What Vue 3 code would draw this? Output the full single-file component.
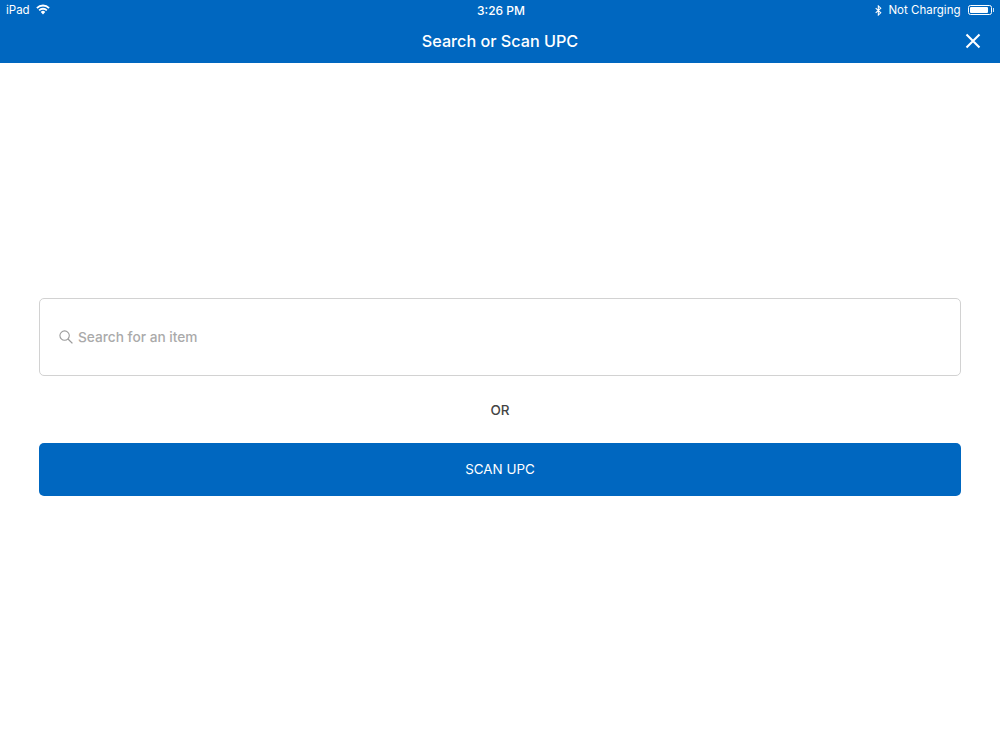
<script setup>
</script>

<template>
  <div class="page">
    <header class="top">
      <div class="status">
        <div class="st-left">
          <span>iPad</span>
          <svg class="wifi" width="14" height="11" viewBox="0 0 16 12"><path d="M8 11.8 5.4 8.9a3.6 3.6 0 0 1 5.2 0zM4.3 7.7 2.9 6.2a7.2 7.2 0 0 1 10.2 0l-1.4 1.5a5.2 5.2 0 0 0-7.4 0zM1.8 5.1.3 3.6a10.8 10.8 0 0 1 15.4 0l-1.5 1.5a8.7 8.7 0 0 0-12.4 0z" fill="#fff"/></svg>
        </div>
        <div class="st-time">3:26 PM</div>
        <div class="st-right">
          <svg class="bt" width="7" height="11" viewBox="0 0 8 12"><path d="M.8 3.2 6.6 8.6 3.8 11.2V.8l2.8 2.6L.8 8.8" fill="none" stroke="#fff" stroke-width="1.2"/></svg>
          <span class="charge">Not Charging</span>
          <span class="battery"><span class="level"></span></span>
          <span class="nub"></span>
        </div>
      </div>
      <div class="nav">
        <h1>Search or Scan UPC</h1>
        <svg class="close" width="16" height="16" viewBox="0 0 16 16"><path d="M1.5 1.5 14.5 14.5M14.5 1.5 1.5 14.5" stroke="#fff" stroke-width="2.1" fill="none"/></svg>
      </div>
    </header>
    <main class="body">
      <div class="search">
        <svg width="14" height="14" viewBox="0 0 14 14"><circle cx="5.6" cy="5.6" r="4.7" fill="none" stroke="#9b9b9b" stroke-width="1.1"/><path d="M9 9l4.4 4.4" stroke="#9b9b9b" stroke-width="1.3"/></svg>
        <span>Search for an item</span>
      </div>
      <div class="or">OR</div>
      <button class="scan">SCAN UPC</button>
    </main>
  </div>
</template>

<style>
body { margin: 0; background: #fff; }
</style>
<style scoped>
.page { width: 1000px; height: 750px; display: flex; flex-direction: column; font-family: Inter, "Liberation Sans", sans-serif; background: #fff; }
.top { background: #0067c0; color: #fff; height: 63px; flex: none; }
.status { height: 20px; display: grid; grid-template-columns: 1fr auto 1fr; align-items: center; padding: 0 6px; font-size: 11.5px; }
.st-left { display: flex; align-items: center; gap: 6px; }
.wifi { margin-top: -1px; }
.st-time { font-weight: 500; font-size: 12px; padding-left: 2px; }
.st-right { display: flex; align-items: center; justify-content: flex-end; }
.bt { margin-right: 6px; }
.battery { width: 24px; height: 10px; border: 1px solid #fff; border-radius: 2.5px; padding: 1px; box-sizing: border-box; display: flex; margin-left: 7px; }
.level { width: 18px; background: #fff; border-radius: 1px; }
.nub { width: 1.5px; height: 4px; background: #fff; margin-left: 1px; opacity: .8; }
.nav { position: relative; height: 43px; display: flex; align-items: center; justify-content: center; }
h1 { margin: 0 0 1px; font-size: 16.2px; font-weight: 500; }
.close { position: absolute; right: 19.5px; top: 13px; }
.body { padding: 235px 39px 0; display: flex; flex-direction: column; }
.search { height: 78px; box-sizing: border-box; border: 1px solid #d2d2d2; border-radius: 5px; display: flex; align-items: center; gap: 5px; padding: 0 0 1px 19px; color: #aaa; font-size: 13.7px; font-weight: 500; }
.or { height: 67px; padding-top: 1px; box-sizing: border-box; display: flex; align-items: center; justify-content: center; font-size: 13.5px; font-weight: 500; color: #444; }
.scan { height: 53px; border: 0; border-radius: 5px; padding: 0 0 2px; background: #0067c0; color: #fff; font: 400 13.4px Inter, sans-serif; }
</style>
